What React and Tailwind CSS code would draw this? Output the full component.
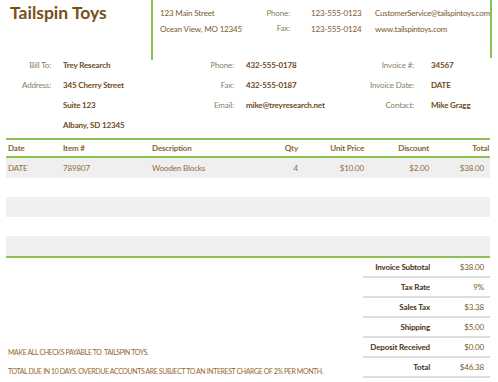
import React from "react";

const green = "border-[#8cc152]";

const billRows = [
  ["Bill To:", "Trey Research", "Phone:", "432-555-0178", "Invoice #:", "34567"],
  ["Address:", "345 Cherry Street", "Fax:", "432-555-0187", "Invoice Date:", "DATE"],
  ["", "Suite 123", "Email:", "mike@treyresearch.net", "Contact:", "Mike Gragg"],
  ["", "Albany, SD 12345", "", "", "", ""],
];

const items = [
  ["DATE", "789807", "Wooden Blocks", "4", "$10.00", "$2.00", "$38.00"],
  ["", "", "", "", "", "", ""],
  ["", "", "", "", "", "", ""],
  ["", "", "", "", "", "", ""],
  ["", "", "", "", "", "", ""],
];

const totals = [
  ["Invoice Subtotal", "$38.00"],
  ["Tax Rate", "9%"],
  ["Sales Tax", "$3.38"],
  ["Shipping", "$5.00"],
  ["Deposit Received", "$0.00"],
  ["Total", "$46.38"],
];

function App() {
  return (
    <div className="w-[498px] h-[382px] bg-white overflow-hidden text-[8px] tracking-[-0.15px] font-['Lato',_'Liberation_Sans',_sans-serif]">
      {/* header */}
      <div className="flex h-[60px]">
        <div className="w-[151px] pl-[10px] pt-[1px]">
          <h1 className="text-[17.5px] tracking-normal font-bold leading-[24px] text-[#7a4f17]">Tailspin Toys</h1>
        </div>
        <div className={`w-[2px] h-[60px] border-l-2 ${green}`} />
        <div className="w-[100px] pl-[7px] pt-[5px] leading-[16px] text-[#7a5a2e]">
          <div>123 Main Street</div>
          <div>Ocean View, MO 12345</div>
        </div>
        <div className="w-[37px] pt-[6px] leading-[15px] text-right text-[#8b7d65]">
          <div>Phone:</div>
          <div>Fax:</div>
        </div>
        <div className="w-[85px] pl-[21px] pt-[5px] leading-[16px] text-[#7a5a2e]">
          <div>123-555-0123</div>
          <div>123-555-0124</div>
        </div>
        <div className="w-[115px] pt-[5px] leading-[16px] tracking-[-0.25px] text-[#7a5a2e] whitespace-nowrap">
          <div>CustomerService@tailspintoys.com</div>
          <div>www.tailspintoys.com</div>
        </div>
        <div className={`w-[2px] h-[58px] border-l-2 ${green}`} />
      </div>

      {/* bill to */}
      <div className="-mt-[5px]">
        {billRows.map((r, i) => (
          <div key={i} className="grid grid-cols-[63px_117px_66px_114px_71px_1fr] h-[20px] items-center">
            <div className="pr-[12px] text-right text-[#8b7d65]">{r[0]}</div>
            <div className="font-bold text-[#6f4a1c]">{r[1]}</div>
            <div className="pr-[12px] text-right text-[#8b7d65]">{r[2]}</div>
            <div className="font-bold text-[#6f4a1c]">{r[3]}</div>
            <div className="pr-[17px] text-right text-[#8b7d65]">{r[4]}</div>
            <div className="font-bold text-[#6f4a1c]">{r[5]}</div>
          </div>
        ))}
      </div>

      {/* items table */}
      <div className={`mt-[3px] ml-[6px] w-[484px] border-t-2 border-b-2 ${green}`}>
        <div className={`grid grid-cols-[57px_89px_100px_46px_66px_65px_61px] h-[18px] items-center border-b-2 ${green} font-bold text-[#86653a]`}>
          <div className="pl-[2px]">Date</div>
          <div>Item #</div>
          <div>Description</div>
          <div className="text-right">Qty</div>
          <div className="text-right">Unit Price</div>
          <div className="text-right">Discount</div>
          <div className="text-right pr-[1px]">Total</div>
        </div>
        {items.map((r, i) => (
          <div
            key={i}
            className={`grid grid-cols-[57px_89px_100px_46px_66px_65px_61px] h-[19.5px] items-center text-[#8e6e42] ${i % 2 === 0 ? "bg-[#efefef]" : "bg-white"}`}
          >
            <div className="pl-[2px]">{r[0]}</div>
            <div>{r[1]}</div>
            <div>{r[2]}</div>
            <div className="text-right">{r[3]}</div>
            <div className="text-right">{r[4]}</div>
            <div className="text-right">{r[5]}</div>
            <div className="text-right pr-[6px]">{r[6]}</div>
          </div>
        ))}
      </div>

      {/* footer */}
      <div className="flex h-[123px]">
        <div className="flex-1 flex flex-col justify-end pl-[8px] text-[7px] tracking-[-0.4px] text-[#94672a] leading-[19px] whitespace-nowrap">
          <div>MAKE ALL CHECKS PAYABLE TO&nbsp; TAILSPIN TOYS.</div>
          <div>TOTAL DUE IN 10 DAYS. OVERDUE ACCOUNTS ARE SUBJECT TO AN INTEREST CHARGE OF 2% PER MONTH.</div>
        </div>
        <div className="w-[127px] mr-[8px]">
          {totals.map(([l, v]) => (
            <div key={l} className="flex h-[20px] items-center border-b-2 border-[#dedede]">
              <div className="w-[67px] text-right font-bold text-[#4a3214]">{l}</div>
              <div className="flex-1 text-right pr-[6px] text-[#7a5a2e]">{v}</div>
            </div>
          ))}
        </div>
      </div>
    </div>
  );
}

export default App;
